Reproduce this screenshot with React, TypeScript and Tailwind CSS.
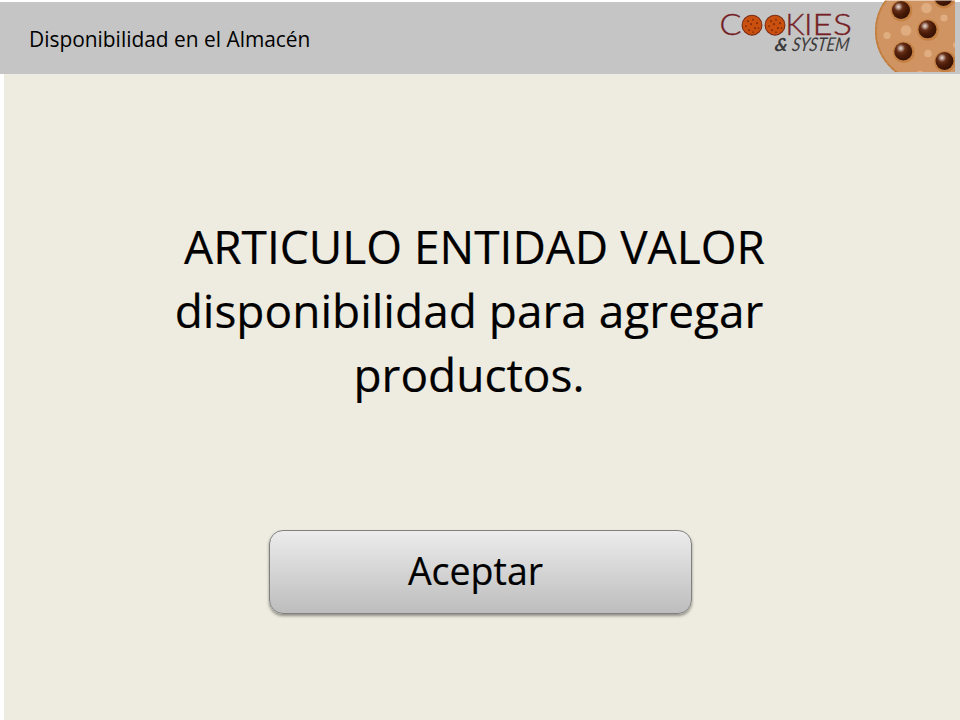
const chips = [
  { x: 41, y: 10, r: 9 },
  { x: 67.5, y: 29.3, r: 9 },
  { x: 43.3, y: 51.5, r: 9 },
  { x: 84.5, y: 61, r: 9 },
  { x: 83.5, y: -3, r: 9 },
];
const spots = [
  { x: 66.5, y: 8, r: 5.3 },
  { x: 84, y: 18, r: 3.6 },
  { x: 46, y: 30.5, r: 5.3 },
  { x: 27, y: 35.5, r: 3.6 },
  { x: 68, y: 53.5, r: 3.8 },
  { x: 96, y: 45, r: 3.2 },
  { x: 60, y: 74, r: 3.5 },
];

function Cookie() {
  return (
    <svg width="85" height="72" viewBox="10 0 85 72" className="block shrink-0">
      <defs>
        <radialGradient id="chip" cx="0.36" cy="0.32" r="0.7">
          <stop offset="0" stopColor="#e9dcd5" />
          <stop offset="0.16" stopColor="#b39587" />
          <stop offset="0.34" stopColor="#682f18" />
          <stop offset="0.6" stopColor="#4c1c08" />
          <stop offset="1" stopColor="#351003" />
        </radialGradient>
      </defs>
      <circle cx="66.5" cy="31" r="50.5" fill="#cf9461" stroke="#c98a50" strokeWidth="2" />
      <circle cx="66.5" cy="31" r="50.8" fill="none" stroke="#c17c3d" strokeWidth="1.4" strokeDasharray="4 1" />
      {spots.map((s) => (
        <circle key={s.x} cx={s.x} cy={s.y} r={s.r} fill="#dfad80" />
      ))}
      {chips.map((c) => (
        <g key={c.x}>
          <circle cx={c.x + 0.5} cy={c.y + 0.7} r={c.r + 1.8} fill="#c58044" />
          <circle cx={c.x} cy={c.y} r={c.r} fill="url(#chip)" />
        </g>
      ))}
      <rect x="10" width="85" height="1" fill="#fff" opacity="0.5" />
    </svg>
  );
}

function MiniCookie({ x }: { x: number }) {
  return (
    <g transform={`translate(${x} 25.2)`}>
      <circle r="9.9" fill="#c9500f" stroke="#7b2a12" strokeWidth="1.1" />
      <g fill="#8d3009">
        <circle cx="-4" cy="-4" r="1.1" />
        <circle cx="1" cy="-5.5" r="1" />
        <circle cx="5" cy="-2" r="1.1" />
        <circle cx="-1" cy="-1" r="1.1" />
        <circle cx="-6" cy="1" r="1" />
        <circle cx="3" cy="3" r="1.1" />
        <circle cx="-3" cy="5" r="1.1" />
        <circle cx="1" cy="7" r="0.9" />
        <circle cx="6.5" cy="3" r="0.9" />
      </g>
    </g>
  );
}

function Logo() {
  return (
    <svg width="140" height="60" viewBox="716 0 140 60" className="block shrink-0">
      <g fill="#742024" stroke="#742024" strokeWidth="0.35" fontFamily="Lato, sans-serif" fontWeight="300" fontSize="28.5">
        <text x="719.5" y="35" textLength="22" lengthAdjust="spacingAndGlyphs">C</text>
        <text x="785.5" y="35" textLength="19" lengthAdjust="spacingAndGlyphs">K</text>
        <text x="804" y="35" textLength="8.5" lengthAdjust="spacingAndGlyphs">I</text>
        <text x="812.5" y="35" textLength="20" lengthAdjust="spacingAndGlyphs">E</text>
        <text x="833" y="35" textLength="19" lengthAdjust="spacingAndGlyphs">S</text>
      </g>
      <MiniCookie x={752} />
      <MiniCookie x={775} />
      <g fill="#3c3c3c" fontFamily="Lato, sans-serif" fontStyle="italic" transform="translate(0 51) skewX(-8)">
        <text x="774" y="0" fontSize="18" fontWeight="700" textLength="13" lengthAdjust="spacingAndGlyphs">&amp;</text>
        <text x="791.5" y="0" fontSize="19" textLength="57" lengthAdjust="spacingAndGlyphs">SYSTEM</text>
      </g>
    </svg>
  );
}

export default function App() {
  return (
    <div className="flex h-[720px] w-[960px] flex-col overflow-hidden bg-white font-['Open_Sans',sans-serif] text-black">
      <header className="flex h-[74px] shrink-0 items-start bg-[#c5c5c5] bg-[linear-gradient(#fff_2px,transparent_2px)]">
        <h1 className="ml-[29px] mt-[25px] w-[687px] whitespace-nowrap text-[20.9px] leading-[28px]">
          Disponibilidad en el Almacén
        </h1>
        <Logo />
        <div className="ml-[14px]">
          <Cookie />
        </div>
      </header>
      <main className="ml-1 flex grow flex-col items-center bg-[#eeebe0]">
        <div className="mr-[26px] mt-[140px] flex flex-col items-center whitespace-nowrap text-[46px] leading-[64px] [-webkit-text-stroke:0.2px_black]">
          <span className="pl-[11px]">ARTICULO ENTIDAD VALOR</span>
          <span>disponibilidad para agregar</span>
          <span>productos.</span>
        </div>
        <button className="mr-[3px] mt-[124px] flex h-[84px] w-[423px] items-center justify-center rounded-[14px] border border-[#808080] bg-linear-to-b from-[#ececec] to-[#bdbdbd] pb-[2px] pr-[10px] text-[37.5px] shadow-[0_2px_3px_rgba(0,0,0,0.4)] [-webkit-text-stroke:0.2px_black]">
          Aceptar
        </button>
      </main>
    </div>
  );
}
